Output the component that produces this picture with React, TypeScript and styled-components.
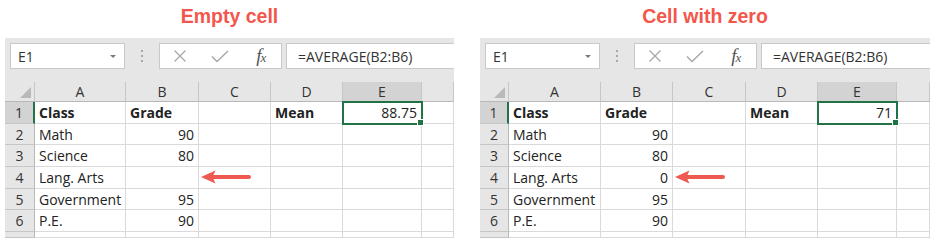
import { Fragment } from "react";
import styled, { createGlobalStyle } from "styled-components";

const GlobalStyle = createGlobalStyle`
  html, body { margin: 0; padding: 0; background: #fff; }
  body { width: 934px; height: 242px; overflow: hidden; font-family: "Liberation Sans", Arial, sans-serif; }
`;

const Page = styled.div`
  display: flex;
  gap: 26px;
  padding-left: 5px;
`;

const Figure = styled.section<{ $width: number }>`
  width: ${(p) => p.$width}px;
  display: flex;
  flex-direction: column;
`;

const Title = styled.h2`
  margin: 0;
  height: 38px;
  box-sizing: border-box;
  padding-top: 5px;
  text-align: center;
  font: bold 19.5px/22px "Liberation Sans", Arial, sans-serif;
  color: #f3564c;
`;

const Sheet = styled.div`
  height: 200px;
  background: #e6e6e6;
  overflow: hidden;
  display: flex;
  flex-direction: column;
  font-family: "Open Sans", "Noto Sans", sans-serif;
  font-size: 14px;
  color: #222;
`;

const FormulaBar = styled.div`
  display: flex;
  height: 26px;
  margin: 5px 0 13px 5px;
`;

const WhiteBox = styled.div`
  background: #fff;
  border: 1px solid #c9c9c9;
  box-sizing: border-box;
  display: flex;
  align-items: center;
`;

const NameBox = styled(WhiteBox)`
  width: 115px;
  padding: 0 8px 0 7px;
  justify-content: space-between;
  color: #333;
`;

const Caret = styled.span`
  width: 0;
  height: 0;
  border-left: 3px solid transparent;
  border-right: 3px solid transparent;
  border-top: 3px solid #7a7a7a;
`;

const Grip = styled.div`
  width: 34px;
  display: flex;
  flex-direction: column;
  align-items: center;
  justify-content: center;
  gap: 3px;

  span {
    width: 2px;
    height: 2px;
    background: #a8a8a8;
  }
`;

const FxButtons = styled(WhiteBox)`
  width: 123px;
  margin-right: 4px;
`;

const FxSlot = styled.div`
  flex: 1;
  display: flex;
  align-items: center;
  justify-content: center;
  color: #a8a8a8;
`;

const FxGlyph = styled.span`
  font-family: "Liberation Serif", "Times New Roman", serif;
  font-style: italic;
  font-size: 19px;
  color: #555;
  letter-spacing: -1px;

  small {
    font-size: 13px;
  }
`;

const FormulaInput = styled(WhiteBox)`
  flex: 1;
  padding-left: 11px;
  border-right: none;
  color: #333;
`;

const Grid = styled.div<{ $cols: string }>`
  flex: 1;
  display: grid;
  grid-template-columns: ${(p) => p.$cols};
  grid-template-rows: 20px repeat(6, 21.7px) 1fr;
`;

const HeadCell = styled.div<{ $active?: boolean }>`
  background: ${(p) => (p.$active ? "#d3d3d3" : "#e6e6e6")};
  border-right: 1px solid #c6c6c6;
  border-bottom: 1px solid #b8b8b8;
  display: flex;
  align-items: center;
  justify-content: center;
  color: #333;
  position: relative;
  overflow: hidden;
`;

const CornerMark = styled.span`
  position: absolute;
  right: 3px;
  bottom: 3px;
  width: 0;
  height: 0;
  border-left: 11px solid transparent;
  border-bottom: 11px solid #b9b9b9;
`;

const RowHead = styled.div<{ $active?: boolean }>`
  background: ${(p) => (p.$active ? "#d3d3d3" : "#e6e6e6")};
  border-right: ${(p) => (p.$active ? "2px solid #217346" : "1px solid #b8b8b8")};
  border-bottom: 1px solid #c6c6c6;
  display: flex;
  align-items: center;
  justify-content: center;
  color: #333;
  overflow: hidden;
`;

const Cell = styled.div<{ $num?: boolean; $bold?: boolean; $selected?: boolean }>`
  background: #fff;
  border-right: 1px solid #dadada;
  border-bottom: 1px solid #dadada;
  display: flex;
  align-items: center;
  justify-content: ${(p) => (p.$num ? "flex-end" : "flex-start")};
  padding: 0 4px;
  font-weight: ${(p) => (p.$bold ? 700 : 400)};
  white-space: nowrap;
  overflow: ${(p) => (p.$selected ? "visible" : "hidden")};
  position: relative;
  ${(p) =>
    p.$selected &&
    `
    outline: 2px solid #217346;
    outline-offset: -1px;
    z-index: 1;
    &::after {
      content: "";
      position: absolute;
      right: -3px;
      bottom: -3px;
      width: 5px;
      height: 5px;
      background: #217346;
      border: 1px solid #fff;
    }
  `}
`;

const Arrow = styled.svg`
  margin-left: -3px;
  flex: none;
`;

const RedArrow = () => (
  <Arrow width="52" height="16" viewBox="0 0 52 16">
    <line x1="11" y1="8" x2="49" y2="8" stroke="#ef5a50" strokeWidth="4" strokeLinecap="round" />
    <path d="M1 8 L15.5 1.5 L12.5 8 L15.5 14.5 Z" fill="#ef5a50" />
  </Arrow>
);

type Row = { name: string; grade: string; arrow?: boolean };

const letters = ["A", "B", "C", "D", "E", ""];

const ExcelView = ({ cols, mean, rows }: { cols: string; mean: string; rows: Row[] }) => (
  <Sheet>
    <FormulaBar>
      <NameBox>
        E1
        <Caret />
      </NameBox>
      <Grip>
        <span />
        <span />
        <span />
      </Grip>
      <FxButtons>
        <FxSlot>
          <svg width="14" height="14" viewBox="0 0 14 14">
            <path d="M1.5 1.5 L12.5 12.5 M12.5 1.5 L1.5 12.5" stroke="#a8a8a8" strokeWidth="1.3" fill="none" />
          </svg>
        </FxSlot>
        <FxSlot>
          <svg width="18" height="14" viewBox="0 0 18 14">
            <path d="M1 7.5 L6 12.5 L17 2" stroke="#a8a8a8" strokeWidth="1.4" fill="none" />
          </svg>
        </FxSlot>
        <FxSlot>
          <FxGlyph>
            f<small>x</small>
          </FxGlyph>
        </FxSlot>
      </FxButtons>
      <FormulaInput>=AVERAGE(B2:B6)</FormulaInput>
    </FormulaBar>
    <Grid $cols={cols}>
      <HeadCell>
        <CornerMark />
      </HeadCell>
      {letters.map((l, i) => (
        <HeadCell key={i} $active={l === "E"}>
          {l}
        </HeadCell>
      ))}

      <RowHead $active>1</RowHead>
      <Cell $bold>Class</Cell>
      <Cell $bold>Grade</Cell>
      <Cell />
      <Cell $bold>Mean</Cell>
      <Cell $num $selected>
        {mean}
      </Cell>
      <Cell />

      {rows.map((r, i) => (
        <Fragment key={r.name}>
          <RowHead>{i + 2}</RowHead>
          <Cell>{r.name}</Cell>
          <Cell $num>{r.grade}</Cell>
          <Cell>{r.arrow && <RedArrow />}</Cell>
          <Cell />
          <Cell />
          <Cell />
        </Fragment>
      ))}

      <RowHead />
      {letters.map((_, i) => (
        <Cell key={"last" + i} />
      ))}
    </Grid>
  </Sheet>
);

const emptyRows: Row[] = [
  { name: "Math", grade: "90" },
  { name: "Science", grade: "80" },
  { name: "Lang. Arts", grade: "", arrow: true },
  { name: "Government", grade: "95" },
  { name: "P.E.", grade: "90" },
];

const zeroRows: Row[] = emptyRows.map((r) => (r.arrow ? { ...r, grade: "0" } : r));

export default function App() {
  return (
    <>
      <GlobalStyle />
      <Page>
        <Figure $width={449}>
          <Title>Empty cell</Title>
          <ExcelView cols="30px 91px 73px 72px 72px 79px 1fr" mean="88.75" rows={emptyRows} />
        </Figure>
        <Figure $width={450}>
          <Title>Cell with zero</Title>
          <ExcelView cols="29px 92px 72px 73px 72px 79px 1fr" mean="71" rows={zeroRows} />
        </Figure>
      </Page>
    </>
  );
}
